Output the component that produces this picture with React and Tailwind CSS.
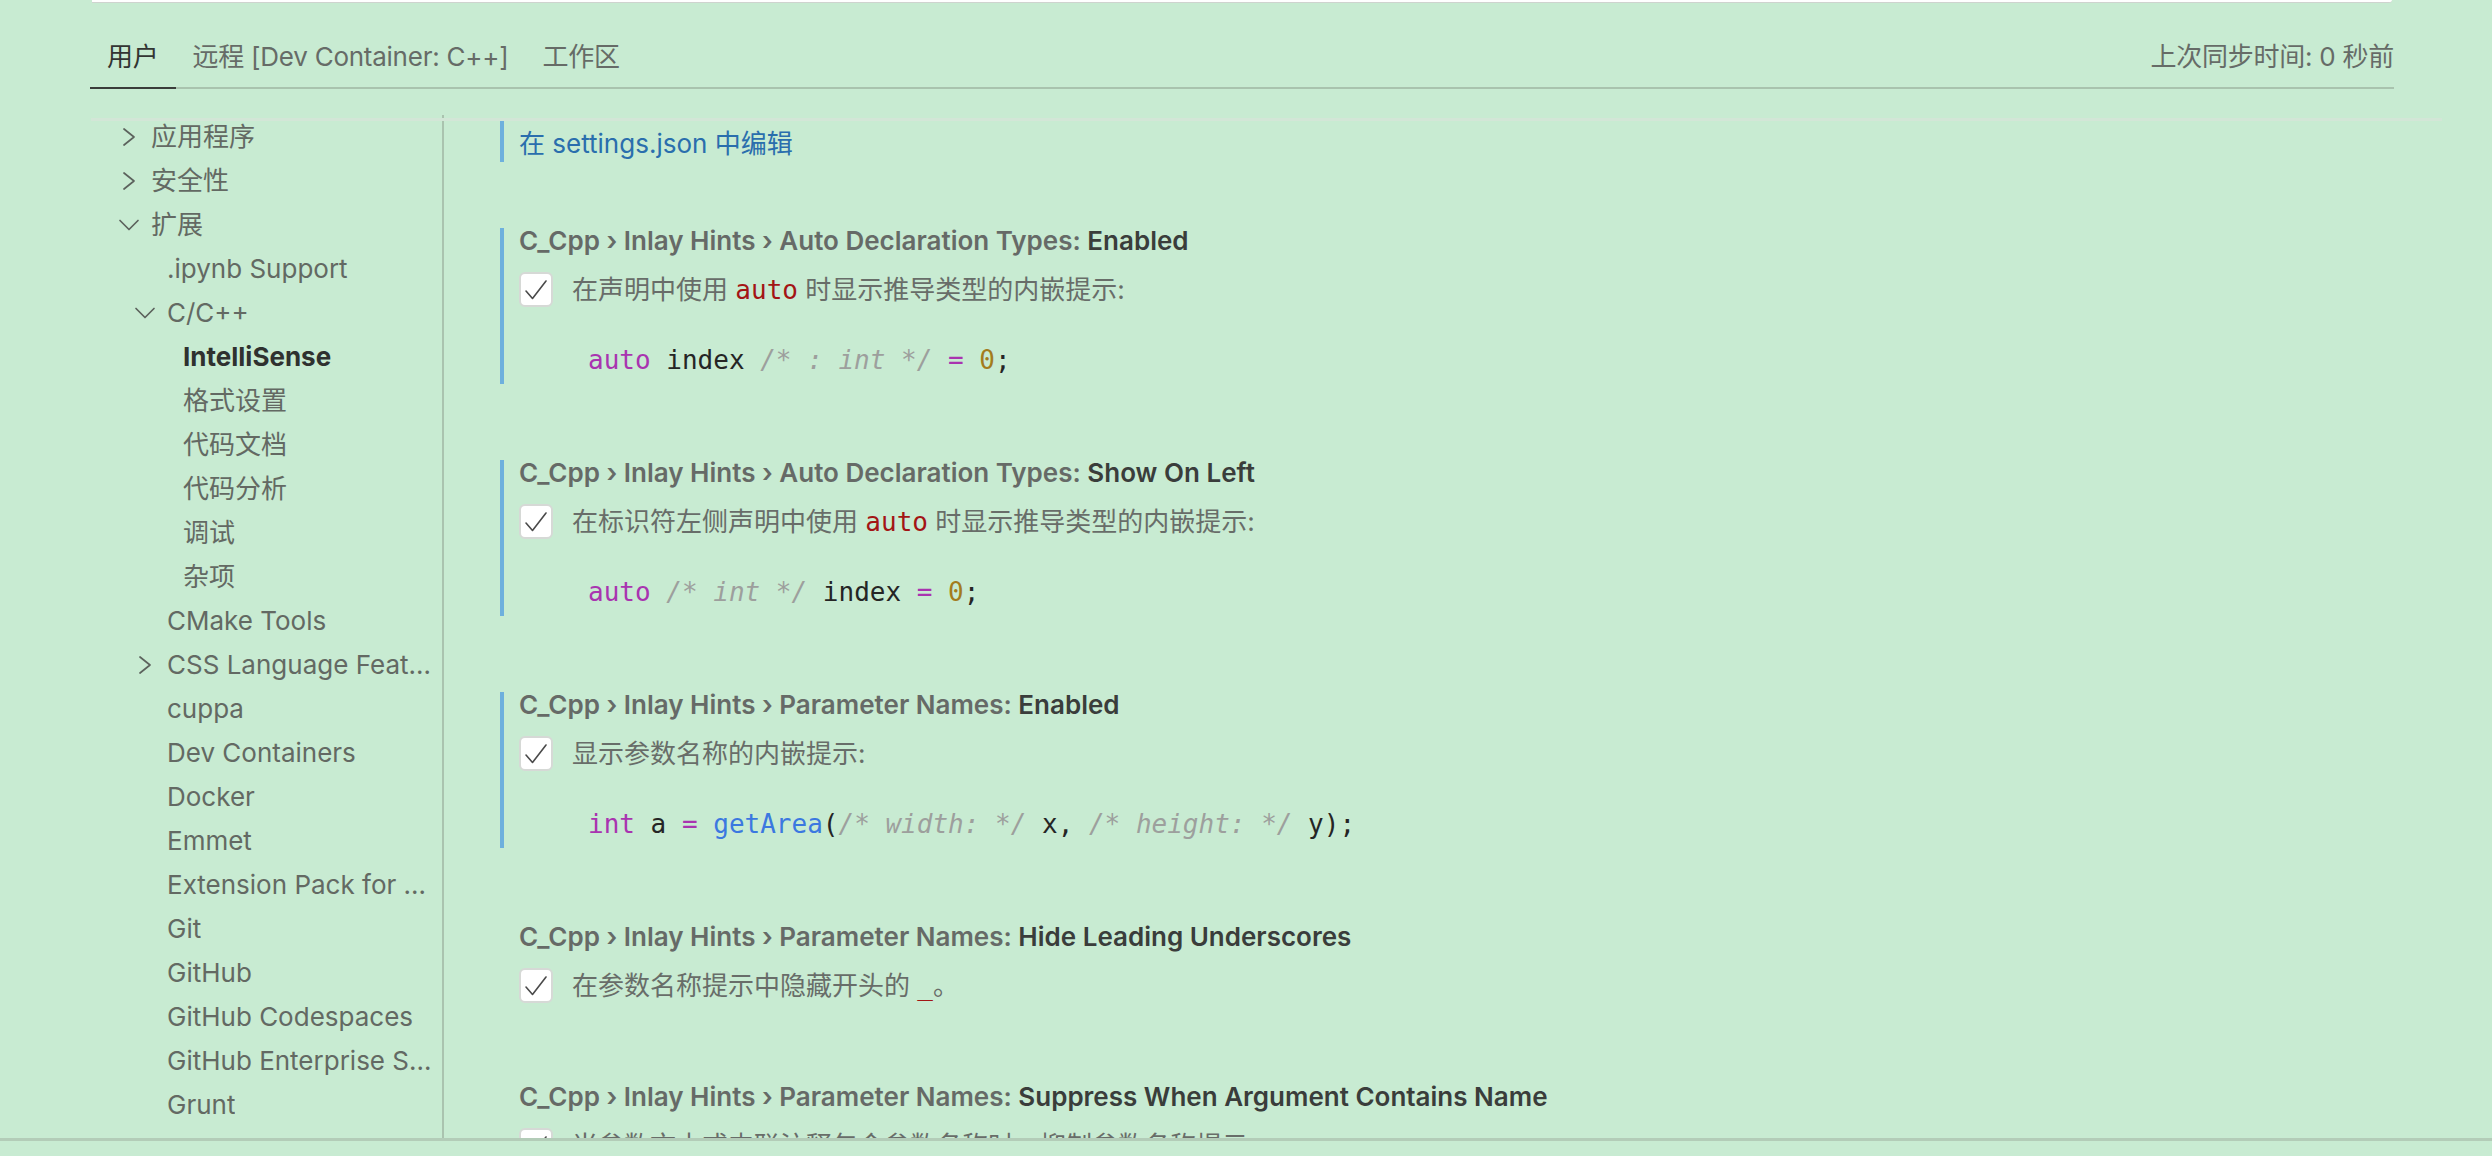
import React from 'react';

const sideItems = [
  { label: '应用程序', level: 1, chevron: 'right' },
  { label: '安全性', level: 1, chevron: 'right' },
  { label: '扩展', level: 1, chevron: 'down' },
  { label: '.ipynb Support', level: 2 },
  { label: 'C/C++', level: 2, chevron: 'down' },
  { label: 'IntelliSense', level: 3, active: true },
  { label: '格式设置', level: 3 },
  { label: '代码文档', level: 3 },
  { label: '代码分析', level: 3 },
  { label: '调试', level: 3 },
  { label: '杂项', level: 3 },
  { label: 'CMake Tools', level: 2 },
  { label: 'CSS Language Features', level: 2, chevron: 'right' },
  { label: 'cuppa', level: 2 },
  { label: 'Dev Containers', level: 2 },
  { label: 'Docker', level: 2 },
  { label: 'Emmet', level: 2 },
  { label: 'Extension Pack for Java', level: 2 },
  { label: 'Git', level: 2 },
  { label: 'GitHub', level: 2 },
  { label: 'GitHub Codespaces', level: 2 },
  { label: 'GitHub Enterprise Server Authentication', level: 2 },
  { label: 'Grunt', level: 2 },
];

const indent = {
  1: 'pl-[24px]',
  2: 'pl-[40px]',
  3: 'pl-[56px]',
};

const Chevron = ({ dir }) => {
  if (!dir) return <span className="w-[28px] shrink-0" />;
  return (
    <svg width="28" height="28" viewBox="0 0 28 28" className="shrink-0" fill="none" stroke="#5c625d" strokeWidth="1.7" strokeLinecap="round" strokeLinejoin="round">
      {dir === 'right' ? <path d="M9 6 L19 14 L9 22" /> : <path d="M5 9.5 L14 18.5 L23 9.5" />}
    </svg>
  );
};

const Checkbox = () => (
  <div className="w-[34px] h-[35px] shrink-0 rounded-[6px] bg-white border-2 border-[#d6d9d6] flex items-center justify-center">
    <svg width="28" height="28" viewBox="0 0 28 28" fill="none" stroke="#4a4a4a" strokeWidth="1.6" strokeLinecap="round" strokeLinejoin="round">
      <path d="M4 15 L10.5 22.5 L24 5" />
    </svg>
  </div>
);

const Code = ({ children }) => (
  <span className="font-['DejaVu_Sans_Mono',monospace] text-[#a31515]">{children}</span>
);

const kw = 'text-[#a934b0]';
const cm = 'text-[#9d9f9d] italic';
const num = 'text-[#a37c1d]';
const fn = 'text-[#3b78e0]';

const Setting = ({ modified, category, name, desc, code, last }) => (
  <div className={`border-l-4 pl-[15px] ${modified ? 'border-[#6eb0dd]' : 'border-transparent'} ${code ? 'pb-[10px]' : 'pb-[5px]'} ${last ? '' : 'mb-[76px]'}`}>
    <div className="leading-[26px] font-semibold text-[#666a67] whitespace-nowrap">
      {category}
      <span className="text-[#3a3d3b]">{name}</span>
    </div>
    <div className="mt-[18px] flex items-center h-[35px]">
      <Checkbox />
      <div className="ml-[19px] text-[#686d69] leading-[34px] whitespace-nowrap">{desc}</div>
    </div>
    {code && (
      <div className="mt-[39px] pl-[69px] leading-[28px] font-['DejaVu_Sans_Mono',monospace] text-[26px] text-[#252525] whitespace-pre">
        {code}
      </div>
    )}
  </div>
);

export default function App() {
  return (
    <div className="relative w-[2492px] h-[1156px] overflow-hidden bg-[#c8ebd2] text-[26px] font-[Inter,'Noto_Sans_CJK_SC',sans-serif]">
      {/* search box edge */}
      <div className="ml-[92px] w-[2300px] h-[3px] bg-white border-b border-[#cfd3cf] rounded-br-[3px]" />

      {/* tabs */}
      <div className="ml-[90px] w-[2304px] mt-[41px] flex items-end border-b-2 border-[#a9c3ae] tracking-[-0.25px]">
        <div className="px-[17px] pb-[17px] leading-[26px] text-[#333533] border-b-2 border-[#3a3c3a] -mb-[2px]">用户</div>
        <div className="px-[17px] pb-[17px] leading-[26px] text-[#666b67] -mb-[2px] border-b-2 border-transparent">远程 [Dev Container: C++]</div>
        <div className="px-[17px] pb-[17px] leading-[26px] text-[#666b67] -mb-[2px] border-b-2 border-transparent">工作区</div>
        <div className="ml-auto pb-[17px] leading-[26px] text-[#666b67]">上次同步时间: 0 秒前</div>
      </div>

      {/* body */}
      <div className="relative mt-[26px] ml-[91px] flex h-[1023px] overflow-hidden">
        <div className="absolute top-[3px] left-0 w-[2351px] h-[3px] bg-[#d3e6d7]" />

        <div className="w-[353px] shrink-0 border-r-2 border-[#aac3af]">
          {sideItems.map((it) => (
            <div key={it.label} className={`flex items-center h-[44px] pr-[6px] ${indent[it.level]}`}>
              <Chevron dir={it.chevron} />
              <span className={`ml-[8px] truncate leading-[36px] ${it.active ? 'font-bold text-[#2f312f]' : 'text-[#636963]'}`}>
                {it.label}
              </span>
            </div>
          ))}
        </div>

        <div className="pl-[56px] flex-1">
          <div className="mt-[3px] mb-[66px] h-[44px] border-l-4 border-[#6eb0dd] pl-[15px] pt-[7px] flex items-center text-[#2a6ead]">
            在 settings.json 中编辑
          </div>

          <Setting
            modified
            category="C_Cpp › Inlay Hints › Auto Declaration Types: "
            name="Enabled"
            desc={<>在声明中使用 <Code>auto</Code> 时显示推导类型的内嵌提示:</>}
            code={
              <>
                <span className={kw}>auto</span> index <span className={cm}>/* : int */</span> <span className={kw}>=</span> <span className={num}>0</span>;
              </>
            }
          />
          <Setting
            modified
            category="C_Cpp › Inlay Hints › Auto Declaration Types: "
            name="Show On Left"
            desc={<>在标识符左侧声明中使用 <Code>auto</Code> 时显示推导类型的内嵌提示:</>}
            code={
              <>
                <span className={kw}>auto</span> <span className={cm}>/* int */</span> index <span className={kw}>=</span> <span className={num}>0</span>;
              </>
            }
          />
          <Setting
            modified
            category="C_Cpp › Inlay Hints › Parameter Names: "
            name="Enabled"
            desc="显示参数名称的内嵌提示:"
            code={
              <>
                <span className={kw}>int</span> a <span className={kw}>=</span> <span className={fn}>getArea</span>(<span className={cm}>/* width: */</span> x, <span className={cm}>/* height: */</span> y);
              </>
            }
          />
          <Setting
            category="C_Cpp › Inlay Hints › Parameter Names: "
            name="Hide Leading Underscores"
            desc={<>在参数名称提示中隐藏开头的 <Code>_</Code>。</>}
          />
          <Setting
            last
            category="C_Cpp › Inlay Hints › Parameter Names: "
            name="Suppress When Argument Contains Name"
            desc="当参数文本或内联注释包含参数名称时，抑制参数名称提示。"
          />
        </div>
      </div>

      {/* bottom panel edge */}
      <div className="h-[3px] bg-[#b3ccb8]" />
    </div>
  );
}
